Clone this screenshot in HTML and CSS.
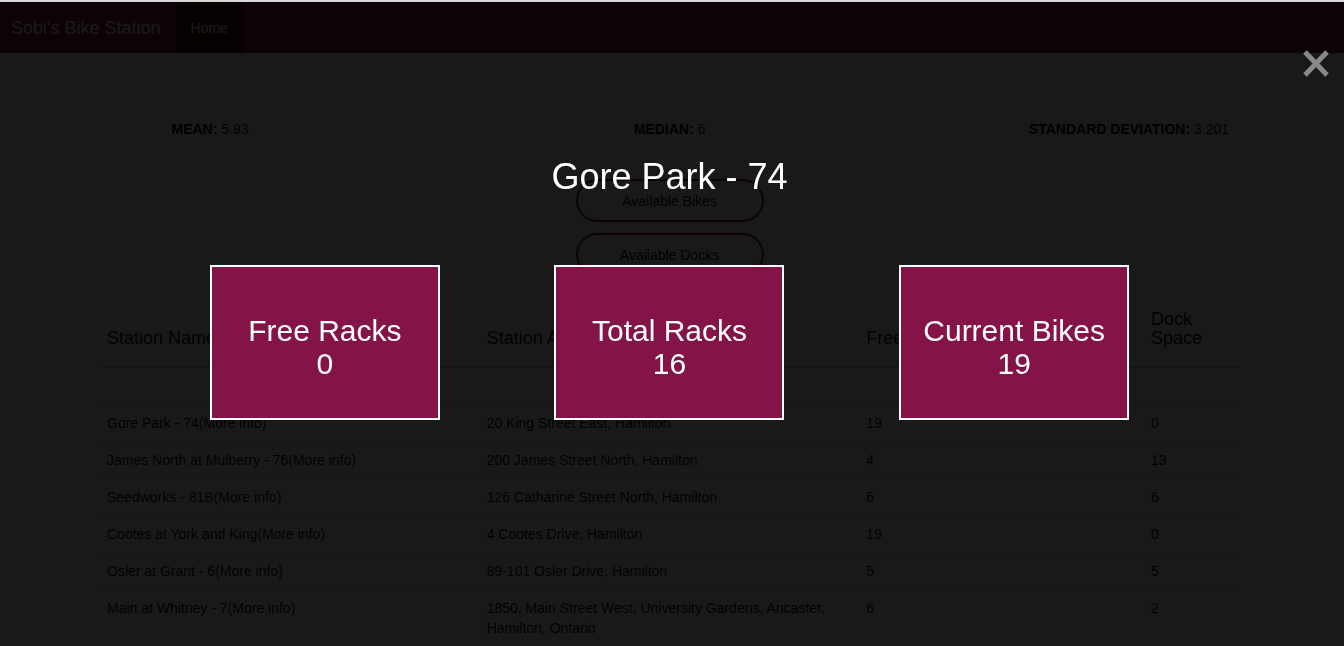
FILE: index.html
```html
<!DOCTYPE html>
<html lang="en">
<head>
<meta charset="utf-8">
<meta name="viewport" content="width=device-width, initial-scale=1">
<title>Sobi's Bike Station</title>
<link rel="stylesheet" href="styles.css">
</head>
<body>
<div class="page">
  <nav class="navbar">
    <a class="brand" href="#">Sobi's Bike Station</a>
    <a class="nav-link" href="#">Home</a>
  </nav>
  <main class="content">
    <div class="stats">
      <div class="stat"><strong>MEAN:</strong> 5.93</div>
      <div class="stat"><strong>MEDIAN:</strong> 6</div>
      <div class="stat"><strong>STANDARD DEVIATION:</strong> 3.201</div>
    </div>
    <div class="filters">
      <button class="pill" type="button">Available Bikes</button>
      <button class="pill" type="button">Available Docks</button>
    </div>
    <table class="stations">
      <colgroup><col class="col-wide"><col class="col-wide"><col class="col-mid"><col></colgroup>
      <thead>
        <tr><th>Station Name</th><th>Station Address</th><th>Free Bikes</th><th>Dock Space</th></tr>
      </thead>
      <tbody>
        <tr class="spacer"><td colspan="4"></td></tr>
        <tr><td>Gore Park - 74<a href="#">(More info)</a></td><td>20 King Street East, Hamilton</td><td>19</td><td>0</td></tr>
        <tr><td>James North at Mulberry - 76<a href="#">(More info)</a></td><td>200 James Street North, Hamilton</td><td>4</td><td>13</td></tr>
        <tr><td>Seedworks - 81B<a href="#">(More info)</a></td><td>126 Catharine Street North, Hamilton</td><td>6</td><td>6</td></tr>
        <tr><td>Cootes at York and King<a href="#">(More info)</a></td><td>4 Cootes Drive, Hamilton</td><td>19</td><td>0</td></tr>
        <tr><td>Osler at Grant - 6<a href="#">(More info)</a></td><td>89-101 Osler Drive, Hamilton</td><td>5</td><td>5</td></tr>
        <tr><td>Main at Whitney - 7<a href="#">(More info)</a></td><td>1850, Main Street West, University Gardens, Ancaster, Hamilton, Ontario</td><td>6</td><td>2</td></tr>
      </tbody>
    </table>
  </main>
</div>
<div class="overlay" role="dialog" aria-labelledby="station-title">
  <button class="close" type="button" aria-label="Close">
    <svg viewBox="0 0 26 27" width="26" height="27" aria-hidden="true"><path d="M2 2 L24 25 M24 2 L2 25" fill="none" stroke="currentColor" stroke-width="5"/></svg>
  </button>
  <h1 class="title" id="station-title">Gore Park - 74</h1>
  <div class="cards">
    <section class="card"><h2>Free Racks<br>0</h2></section>
    <section class="card"><h2>Total Racks<br>16</h2></section>
    <section class="card"><h2>Current Bikes<br>19</h2></section>
  </div>
</div>
</body>
</html>
```

FILE: styles.css
```css
* { box-sizing: border-box; }

body {
  margin: 0;
  font-family: "Liberation Sans", Arial, sans-serif;
  font-size: 14px;
  line-height: 20px;
  color: #111;
  background: #fff;
}

a { color: #3c0821; text-decoration: none; }

.page { border-top: 2px solid #d8d8dc; }

.navbar {
  display: flex;
  min-height: 51px;
  background: #831447;
}

.brand {
  padding: 16px 15px 15px 11px;
  font-size: 18px;
  color: #fff;
}

.nav-link {
  padding: 16px 15px 15px;
  color: #fff;
  background: #3a0a20;
}

.content {
  max-width: 1144px;
  margin: 0 auto;
  padding: 66px 5px 0 0;
}

.stats {
  display: flex;
  justify-content: space-between;
}

.stat { flex: 0 0 220px; text-align: center; }
.stat strong { color: #000; }

.filters {
  display: flex;
  flex-direction: column;
  align-items: center;
  gap: 11px;
  padding: 40px 0 24px;
}

.pill {
  width: 188px;
  height: 43px;
  border: 2px solid #831447;
  border-radius: 22px;
  background: transparent;
  font: inherit;
  color: #111;
}

.stations {
  width: 100%;
  table-layout: fixed;
  border-collapse: collapse;
}

.col-wide { width: 33.33%; }
.col-mid { width: 25%; }

.stations th {
  padding: 10px 7px 18px;
  border-bottom: 2px solid #ccc;
  font-size: 18px;
  font-weight: 400;
  line-height: 19px;
  text-align: left;
  vertical-align: bottom;
}

.stations td {
  padding: 8px 7px;
  border-top: 1px solid #ddd;
  vertical-align: top;
}

.stations .spacer td { height: 37px; border-top: 0; }

.overlay {
  position: fixed;
  inset: 2px 0 0;
  padding: 155px 5px 0 0;
  background: rgba(0, 0, 0, 0.9);
  color: #fff;
}

.close {
  position: absolute;
  top: 48px;
  right: 15px;
  padding: 0;
  border: 0;
  background: transparent;
  color: #8a8888;
}

.close svg { display: block; }

.title {
  margin: 0;
  font-size: 36px;
  font-weight: 400;
  line-height: 40px;
  text-align: center;
}

.cards {
  display: grid;
  grid-template-columns: repeat(3, 1fr);
  justify-items: center;
  max-width: 1034px;
  margin: 68px auto 0;
}

.card {
  width: 230px;
  padding: 47px 10px 38px;
  border: 2px solid #fff;
  background: #841447;
  text-align: center;
}

.card h2 {
  margin: 0;
  font-size: 30px;
  font-weight: 400;
  line-height: 33px;
}
```
